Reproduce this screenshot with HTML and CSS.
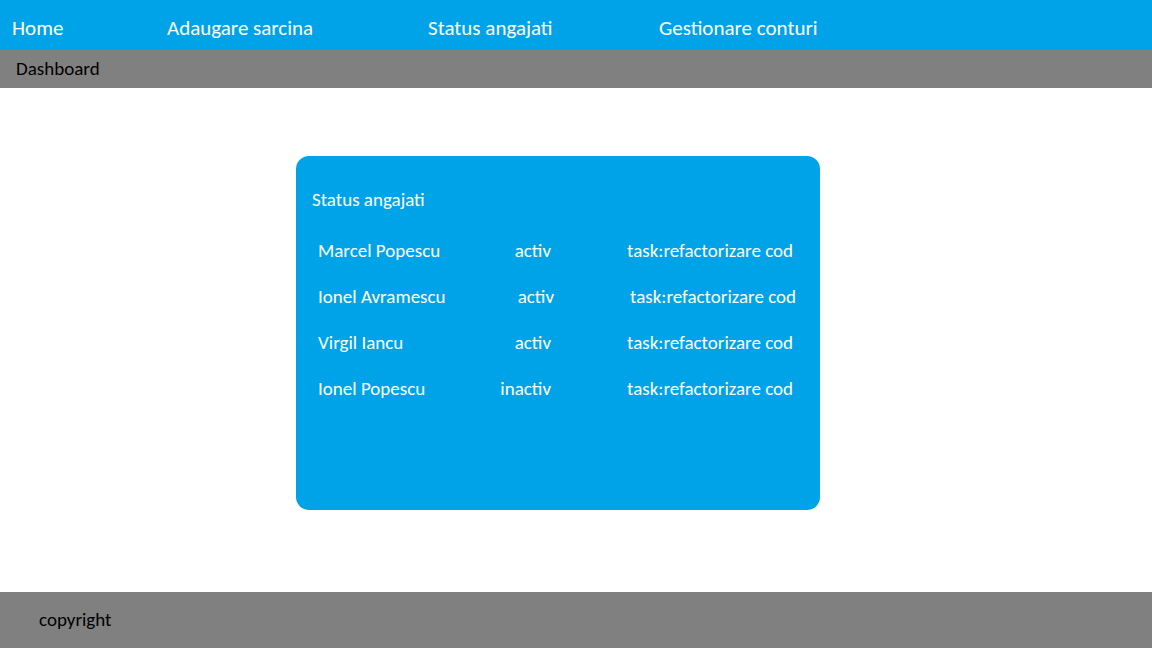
FILE: index.html
```html
<!DOCTYPE html>
<html>
<head>
<meta charset="utf-8">
<link rel="stylesheet" href="styles.css">
</head>
<body>
<nav class="topnav">
  <a class="nav-link">Home</a>
  <a class="nav-link">Adaugare sarcina</a>
  <a class="nav-link">Status angajati</a>
  <a class="nav-link">Gestionare conturi</a>
</nav>
<div class="subbar">Dashboard</div>
<main class="content">
  <section class="card">
    <h2 class="card-title">Status angajati</h2>
    <div class="rows">
      <div class="row"><span class="name">Marcel Popescu</span><span class="status">activ</span><span class="task">task:refactorizare cod</span></div>
      <div class="row row-shift"><span class="name">Ionel Avramescu</span><span class="status">activ</span><span class="task">task:refactorizare cod</span></div>
      <div class="row"><span class="name">Virgil Iancu</span><span class="status">activ</span><span class="task">task:refactorizare cod</span></div>
      <div class="row"><span class="name">Ionel Popescu</span><span class="status">inactiv</span><span class="task">task:refactorizare cod</span></div>
    </div>
  </section>
</main>
<footer class="footer">copyright</footer>
</body>
</html>
```
FILE: styles.css
```css
* { box-sizing: border-box; }
html, body { margin: 0; padding: 0; }
body {
  font-family: "Carlito", "Lato", sans-serif;
  width: 1152px;
  height: 648px;
  display: flex;
  flex-direction: column;
  background: #ffffff;
}
.topnav {
  flex: 0 0 50px;
  height: 50px;
  background: #00a3e8;
  display: grid;
  grid-template-columns: 155px 261px 231px auto;
  align-items: center;
  padding-left: 12px;
}
.nav-link {
  color: #ffffff;
  font-size: 21px;
  line-height: 1;
  padding-top: 6px;
}
.subbar {
  flex: 0 0 38px;
  height: 38px;
  background: #808080;
  color: #000000;
  font-size: 19px;
  padding-left: 16px;
  display: flex;
  align-items: center;
  padding-bottom: 2px;
}
.content {
  flex: 1;
  padding-top: 68px;
  padding-left: 296px;
}
.card {
  width: 524px;
  height: 354px;
  background: #00a3e8;
  border-radius: 13px;
  color: #ffffff;
  padding: 34px 0 0 16px;
}
.card-title {
  margin: 0;
  font-weight: normal;
  font-size: 19px;
  line-height: 20px;
}
.rows {
  padding-left: 6px;
  padding-top: 31px;
  display: flex;
  flex-direction: column;
  gap: 26px;
}
.row {
  display: grid;
  grid-template-columns: 160px 73px auto;
  font-size: 19px;
  line-height: 20px;
}
.status { text-align: right; }
.task { padding-left: 76px; }
.row-shift .status, .row-shift .task { position: relative; left: 3px; }
.footer {
  flex: 0 0 56px;
  height: 56px;
  background: #808080;
  color: #000000;
  font-size: 19px;
  padding-left: 39px;
  display: flex;
  align-items: center;
  padding-bottom: 2px;
}
```
